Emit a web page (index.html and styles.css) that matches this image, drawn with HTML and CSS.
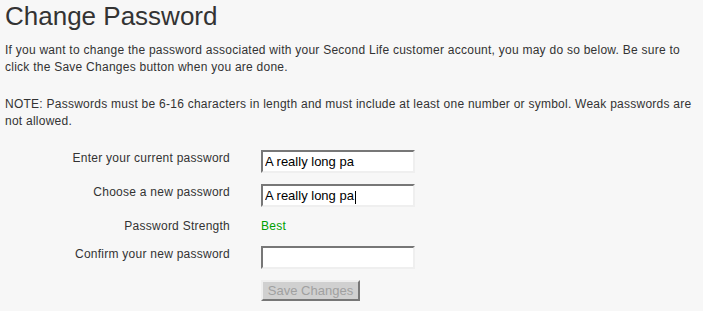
FILE: index.html
```html
<!DOCTYPE html>
<html>
<head>
<meta charset="utf-8">
<title>Change Password</title>
<link rel="stylesheet" href="styles.css">
</head>
<body>
<div class="page">
  <h1 class="title">Change Password</h1>
  <p class="text">If you want to change the password associated with your Second Life customer account, you may do so below. Be sure to click the Save Changes button when you are done.</p>
  <p class="text">NOTE: Passwords must be 6-16 characters in length and must include at least one number or symbol. Weak passwords are not allowed.</p>
  <form class="form">
    <label class="label" for="cur">Enter your current password</label>
    <div class="cell"><input class="field" id="cur" type="text" value="A really long pa"></div>
    <label class="label" for="new">Choose a new password</label>
    <div class="cell field-wrap"><input class="field" id="new" type="text" value="A really long pa"><span class="caret"></span></div>
    <div class="label">Password Strength</div>
    <div class="cell strength">Best</div>
    <label class="label" for="conf">Confirm your new password</label>
    <div class="cell"><input class="field" id="conf" type="text" value=""></div>
    <div class="label"></div>
    <div class="cell"><button class="btn" type="button" disabled>Save Changes</button></div>
  </form>
</div>
</body>
</html>
```

FILE: styles.css
```css
html, body {
  margin: 0;
  padding: 0;
  background: #f7f7f7;
}
body {
  font-family: "Liberation Sans", Arial, sans-serif;
  color: #333;
}
.page {
  padding: 1px 5px 0 5px;
}
.title {
  margin: 0 0 11px 0;
  font-size: 26px;
  line-height: 30px;
  font-weight: normal;
  color: #333;
}
.text {
  margin: 0 0 20px 0;
  font-size: 12px;
  line-height: 17px;
  letter-spacing: 0.25px;
}
.form {
  display: grid;
  grid-template-columns: 225px 200px;
  column-gap: 31px;
  row-gap: 11px;
  margin: 0;
}
.label {
  text-align: right;
  font-size: 12px;
  line-height: 17px;
  letter-spacing: 0.25px;
  color: #333;
}
.cell {
  font-size: 12px;
  line-height: 17px;
}
.field-wrap {
  position: relative;
}
.field {
  box-sizing: border-box;
  display: block;
  width: 154px;
  height: 23px;
  margin: 0;
  padding: 0 2px;
  border: 2px solid;
  border-color: #777 #efefef #efefef #777;
  background: #fff;
  font-family: "Liberation Sans", Arial, sans-serif;
  font-size: 13px;
  color: #000;
  outline: none;
}
.caret {
  position: absolute;
  left: 94px;
  top: 7px;
  width: 1px;
  height: 13px;
  background: #000;
}
.strength {
  color: #00a000;
  letter-spacing: 0.25px;
}
.btn {
  box-sizing: border-box;
  display: block;
  width: 99px;
  height: 21px;
  margin: 0;
  padding: 0;
  border: 2px solid;
  border-color: #efefef #777 #777 #efefef;
  background: #d0d0d0;
  font-family: "Liberation Sans", Arial, sans-serif;
  font-size: 13px;
  color: #a0a0a0;
}
```
